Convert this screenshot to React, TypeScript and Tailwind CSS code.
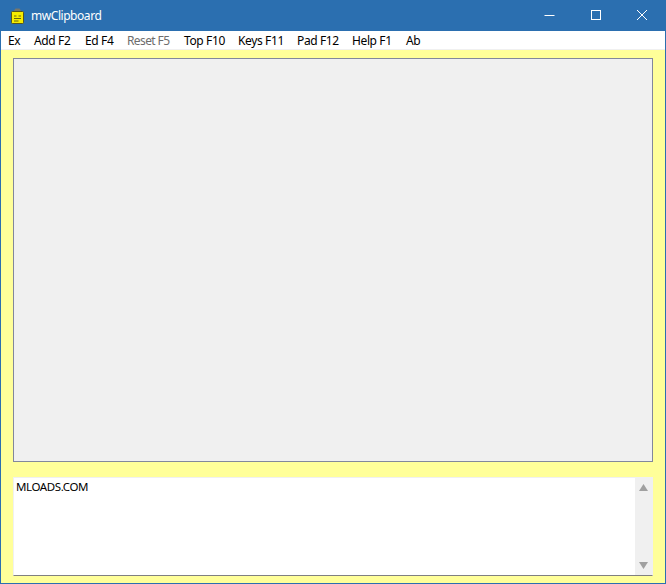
const menu = [
  { label: "Ex", w: "w-[26px]" },
  { label: "Add F2", w: "w-[51px]" },
  { label: "Ed F4", w: "w-[42px]" },
  { label: "Reset F5", w: "w-[57px]", dim: true },
  { label: "Top F10", w: "w-[54px]" },
  { label: "Keys F11", w: "w-[59px]" },
  { label: "Pad F12", w: "w-[55px]" },
  { label: "Help F1", w: "w-[54px]" },
  { label: "Ab", w: "w-[30px]" },
];

export default function App() {
  return (
    <div className="w-[666px] h-[584px] flex flex-col bg-[#2b6fb0] px-px pb-px font-['Noto_Sans',sans-serif] overflow-hidden">
      <div className="h-[31px] shrink-0 flex items-center text-white">
        <svg width="14" height="17" viewBox="0 0 14 17" className="ml-[9px] mt-px">
          <path d="M4 4.5 V2.5 L5.5 0.5 H9.5 L11 2.5 V4.5 Z" fill="#77776a" />
          <rect x="1.5" y="3.5" width="12" height="12" rx="1" fill="#f5ec00" stroke="#55551c" />
          <path d="M4 8h2.5M8.5 8h2.5M4 10.5h7M4 13h4.5" stroke="#66660f" strokeWidth="1" />
        </svg>
        <span className="ml-[7px] mt-px text-[12px] leading-none tracking-[-0.45px]">mwClipboard</span>
        <div className="ml-auto flex items-center">
          <svg width="46" height="31" viewBox="0 0 46 31" stroke="#fff" fill="none">
            <path d="M17.5 15.5h10" />
          </svg>
          <svg width="46" height="31" viewBox="0 0 46 31" stroke="#fff" fill="none">
            <rect x="18.5" y="10.5" width="9" height="9" />
          </svg>
          <svg width="46" height="31" viewBox="0 0 46 31" stroke="#fff" fill="none">
            <path d="M18 10l10 10M28 10l-10 10" />
          </svg>
        </div>
      </div>
      <div className="h-[19px] shrink-0 bg-white border-b border-[#f0f0f0] flex items-center pl-[7px] pt-px text-[12px] tracking-[-0.38px] text-black">
        {menu.map((m) => (
          <span key={m.label} className={`${m.w} whitespace-nowrap ${m.dim ? "text-[#6d6d6d] tracking-[-0.6px]" : ""}`}>
            {m.label}
          </span>
        ))}
      </div>
      <div className="flex-1 flex flex-col bg-[#ffff99] pt-2 pb-[7px] pl-3 pr-3">
        <div className="h-[404px] shrink-0 bg-[#f0f0f0] border border-[#82879b]" />
        <div className="mt-[15px] h-[99px] shrink-0 flex bg-white border-t border-l border-t-[#f0f0f0] border-l-[#f0f0f0] border-b border-b-[#808080] border-r border-r-[#f0f0f0]">
          <div className="flex-1 pl-[2px] pt-[1px] text-[11.5px] leading-[16px] tracking-[-0.4px] text-black">MLOADS.COM</div>
          <div className="w-[17px] flex flex-col items-center justify-between bg-[#f0f0f0] py-[6px]">
            <svg width="9" height="7" viewBox="0 0 9 7" fill="#a0a0a0"><path d="M4.5 0L9 7H0z" /></svg>
            <svg width="9" height="7" viewBox="0 0 9 7" fill="#a0a0a0"><path d="M0 0H9L4.5 7z" /></svg>
          </div>
        </div>
      </div>
    </div>
  );
}
